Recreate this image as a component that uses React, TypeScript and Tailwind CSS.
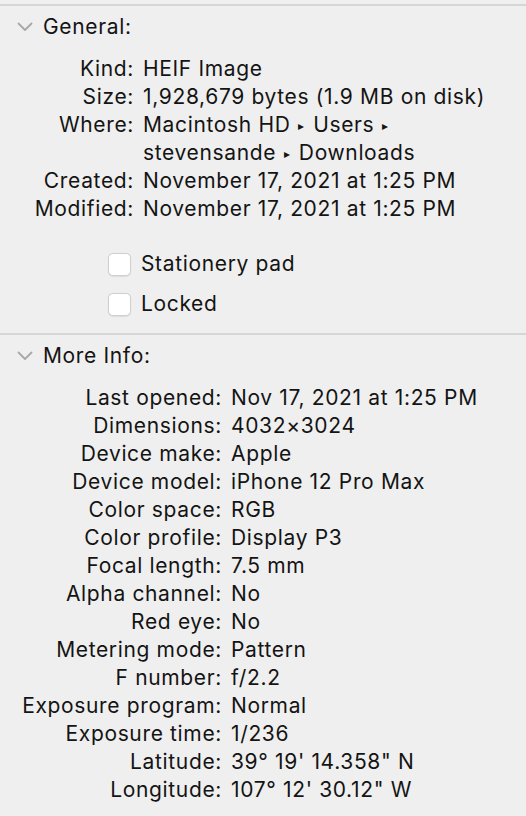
import React from "react";

const font = { fontFamily: "Inter, 'Liberation Sans', sans-serif" };

function Chevron() {
  return (
    <svg width="16" height="10" viewBox="0 0 16 10" className="shrink-0">
      <path d="M1.5 1.5 L8 8 L14.5 1.5" fill="none" stroke="#a8a8a8" strokeWidth="1.8" strokeLinecap="round" strokeLinejoin="round" />
    </svg>
  );
}

function Header({ title }: { title: string }) {
  return (
    <div className="flex items-center h-[42px] mb-[6px] pl-[17px]">
      <Chevron />
      <span className="ml-[10px]">{title}</span>
    </div>
  );
}

function Row({ label, value, lw }: { label: string; value: React.ReactNode; lw: string }) {
  return (
    <div className="flex h-[28px] items-center whitespace-nowrap pt-[1px]">
      <div className={`${lw} text-right shrink-0`}>{label}</div>
      <div className="ml-[9px]">{value}</div>
    </div>
  );
}

function Check({ label }: { label: string }) {
  return (
    <div className="flex items-center h-[28px] pl-[108px]">
      <div className="w-[23px] h-[23px] rounded-[5px] border border-[#cfcfcf] bg-white shadow-[0_0.5px_1px_rgba(0,0,0,0.08)]" />
      <span className="ml-[10px]">{label}</span>
    </div>
  );
}

const Tri = () => <span className="text-[12px] mx-[8px] relative top-[-2px]">▸</span>;

export default function App() {
  const g = "w-[134px]";
  const m = "w-[222px]";
  return (
    <div className="w-[526px] h-[816px] bg-[#efefef] overflow-hidden text-[21px] text-[#141414] tracking-[0.65px]" style={font}>
      <div className="h-[4px]" />
      <div className="h-[2px] bg-[#d6d6d6]" />
      <Header title="General:" />
      <Row lw={g} label="Kind:" value="HEIF Image" />
      <Row lw={g} label="Size:" value="1,928,679 bytes (1.9 MB on disk)" />
      <Row lw={g} label="Where:" value={<span>Macintosh HD<Tri />Users<Tri /></span>} />
      <Row lw={g} label="" value={<span>stevensande<Tri />Downloads</span>} />
      <Row lw={g} label="Created:" value="November 17, 2021 at 1:25 PM" />
      <Row lw={g} label="Modified:" value="November 17, 2021 at 1:25 PM" />
      <div className="h-[28px]" />
      <div className="flex flex-col gap-[12px]">
        <Check label="Stationery pad" />
        <Check label="Locked" />
      </div>
      <div className="h-[15px]" />
      <div className="h-[2px] bg-[#d6d6d6]" />
      <Header title="More Info:" />
      <Row lw={m} label="Last opened:" value="Nov 17, 2021 at 1:25 PM" />
      <Row lw={m} label="Dimensions:" value="4032×3024" />
      <Row lw={m} label="Device make:" value="Apple" />
      <Row lw={m} label="Device model:" value="iPhone 12 Pro Max" />
      <Row lw={m} label="Color space:" value="RGB" />
      <Row lw={m} label="Color profile:" value="Display P3" />
      <Row lw={m} label="Focal length:" value="7.5 mm" />
      <Row lw={m} label="Alpha channel:" value="No" />
      <Row lw={m} label="Red eye:" value="No" />
      <Row lw={m} label="Metering mode:" value="Pattern" />
      <Row lw={m} label="F number:" value="f/2.2" />
      <Row lw={m} label="Exposure program:" value="Normal" />
      <Row lw={m} label="Exposure time:" value="1/236" />
      <Row lw={m} label="Latitude:" value={"39° 19' 14.358\" N"} />
      <Row lw={m} label="Longitude:" value={"107° 12' 30.12\" W"} />
    </div>
  );
}
